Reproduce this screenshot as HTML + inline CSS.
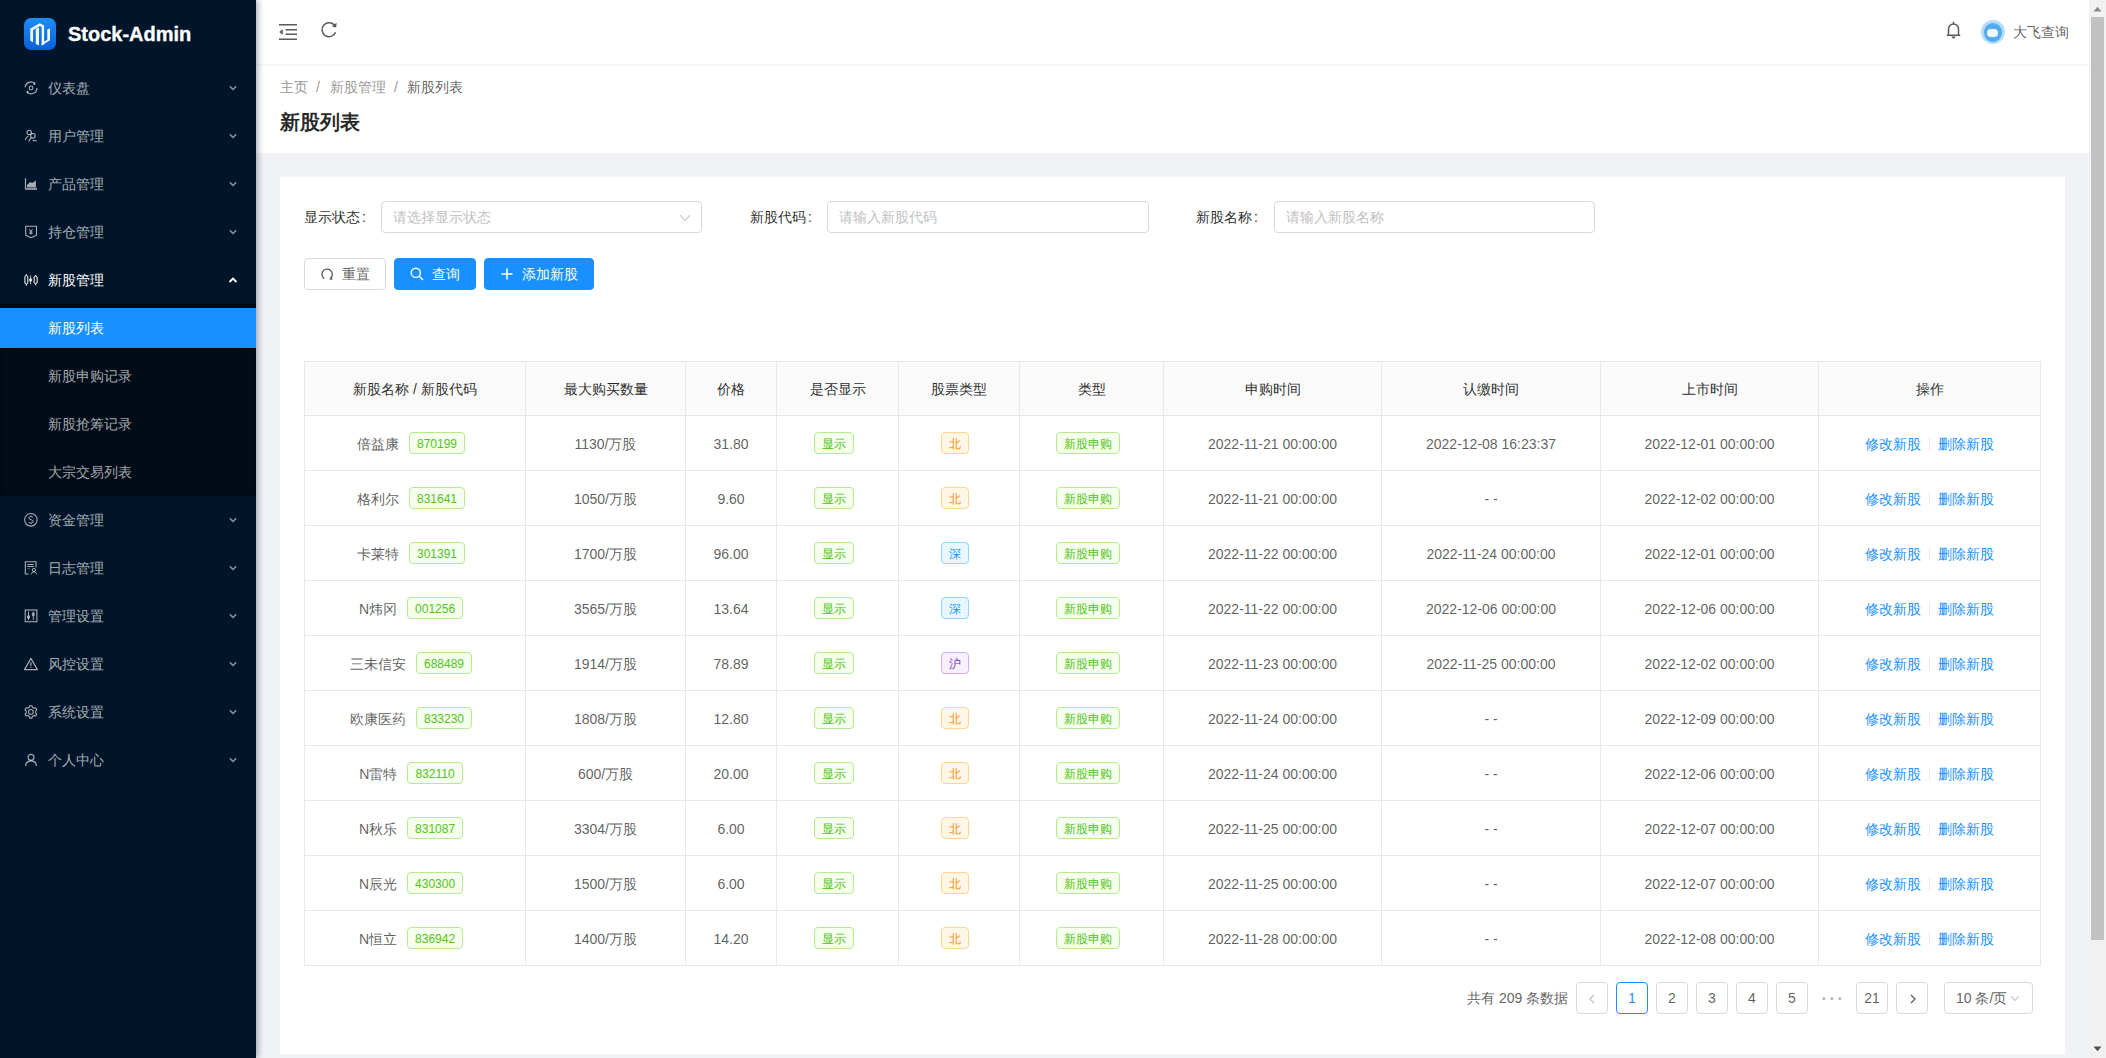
<!DOCTYPE html><html><head><meta charset="utf-8"><title>Stock-Admin</title><style>
*{margin:0;padding:0;box-sizing:border-box}
html,body{width:2106px;height:1058px;overflow:hidden}
body{background:#f0f2f5;font-family:"Liberation Sans",sans-serif;font-size:14px;color:rgba(0,0,0,.65);position:relative}
.a{position:absolute}
.side{left:0;top:0;width:256px;height:1058px;background:#001529;box-shadow:2px 0 6px rgba(0,21,41,.35);z-index:3}
.logo{left:24px;top:18px;width:32px;height:32px;border-radius:7px;background:linear-gradient(180deg,#1c8ef5,#0b5fd8)}
.brand{left:68px;top:20px;font-size:20px;font-weight:bold;color:#fff;-webkit-text-stroke:0.35px #fff;line-height:28px;white-space:nowrap}
.mi{left:0;width:256px;height:40px;line-height:40px;color:rgba(255,255,255,.65);white-space:nowrap}
.mi .t{position:absolute;left:48px;top:0}
.mi svg.ic{position:absolute;left:24px;top:13px;overflow:visible}
.mi svg.ar{position:absolute;left:228px;top:16px}
.sub{left:0;top:304px;width:256px;height:192px;background:#000c17;box-shadow:inset 0 2px 8px rgba(0,0,0,.45)}
.sel{background:#1890ff;color:#fff}
.hdr{left:256px;top:0;width:1833px;height:64px;background:#fff;box-shadow:0 1px 2px rgba(0,21,41,.07);z-index:2}
.ph{left:256px;top:64px;width:1833px;height:89px;background:#fff;z-index:1}
.card{left:280px;top:177px;width:1785px;height:877px;background:#fff}
.lbl{color:rgba(0,0,0,.85);white-space:nowrap;line-height:32px}
.inp{height:32px;border:1px solid #d9d9d9;border-radius:4px;background:#fff;color:#bfbfbf;line-height:30px;padding-left:11px;white-space:nowrap}
.btn{height:32px;border-radius:4px;line-height:30px;white-space:nowrap;border:1px solid #d9d9d9;color:rgba(0,0,0,.65);background:#fff}
.btn.p{background:#1890ff;border-color:#1890ff;color:#fff}
.th{background:#fafafa;color:rgba(0,0,0,.85)}
.hl{background:#e8e8e8}
.c{text-align:center;white-space:nowrap}
.tag{display:inline-block;height:22px;line-height:22px;padding:0 7px;border-radius:4px;border:1px solid;font-size:12px;vertical-align:middle;margin-right:8px;position:relative;top:-2px}
.tg{color:#52c41a;background:#f6ffed;border-color:#b7eb8f}
.to{color:#fa8c16;background:#fff7e6;border-color:#ffd591}
.tb{color:#1890ff;background:#e6f7ff;border-color:#91d5ff}
.tp{color:#722ed1;background:#f9f0ff;border-color:#d3adf7}
.lk{color:#1890ff}
.pg{width:32px;height:32px;border:1px solid #d9d9d9;border-radius:4px;background:#fff;text-align:center;line-height:30px;color:rgba(0,0,0,.65)}
.sb{left:2089px;top:0;width:17px;height:1058px;background:#f1f1f1;z-index:5}
</style></head><body>
<div class="a side">
<div class="a logo"><svg width="32" height="32" viewBox="0 0 32 32" style="position:absolute;left:0;top:0"><path d="M6.3 10.6L15.8 5.3L20.1 7.5V26.3L17.7 27.4V9.1L15.8 8.1L9.1 11.9V24.2L6.3 22.8Z" fill="#f2faff"/><path d="M11.8 10.9L15 9.2V27.4L11.8 26Z" fill="#f2faff"/><path d="M23.3 11.6L26 10.3V22.3L17.7 27.4V25L23.3 21.8Z" fill="#f2faff"/></svg></div>
<div class="a brand">Stock-Admin</div>
<div class="a sub"></div>
<div class="a mi" style="top:68px;"><svg class="ic" width="14" height="14" viewBox="0 0 14 14"><path d="M1.1 6.3A5.95 5.95 0 0 1 10.95 2.5" fill="none" stroke="currentColor" stroke-width="1.15"/><path d="M12.95 6.9A5.95 5.95 0 0 1 2.95 11.25" fill="none" stroke="currentColor" stroke-width="1.15"/><circle cx="10.4" cy="2.9" r="1.05" fill="currentColor"/><circle cx="3.5" cy="10.9" r="1.05" fill="currentColor"/><circle cx="7" cy="6.9" r="1.9" fill="none" stroke="currentColor" stroke-width="1.1"/></svg><span class="t">仪表盘</span><svg class="ar" width="10" height="8" viewBox="0 0 10 8"><path d="M1.8 2.3 L5 5.5 L8.2 2.3" fill="none" stroke="currentColor" stroke-width="1.5" opacity=".85"/></svg></div>
<div class="a mi" style="top:116px;"><svg class="ic" width="14" height="14" viewBox="0 0 14 14"><circle cx="5.2" cy="3.5" r="2.2" fill="none" stroke="currentColor" stroke-width="1.1"/><path d="M1.3 11C1.6 9 2.8 7.6 4.5 7" fill="none" stroke="currentColor" stroke-width="1.1"/><circle cx="8.9" cy="6.8" r="2.3" fill="none" stroke="currentColor" stroke-width="1.1"/><path d="M7.2 8.6L4.6 12.4" stroke="currentColor" stroke-width="1.1"/><path d="M8.7 11.6h4" stroke="currentColor" stroke-width="1.1"/></svg><span class="t">用户管理</span><svg class="ar" width="10" height="8" viewBox="0 0 10 8"><path d="M1.8 2.3 L5 5.5 L8.2 2.3" fill="none" stroke="currentColor" stroke-width="1.5" opacity=".85"/></svg></div>
<div class="a mi" style="top:164px;"><svg class="ic" width="14" height="14" viewBox="0 0 14 14"><path d="M1.5 1.2V12.2H13" fill="none" stroke="currentColor" stroke-width="1.2"/><path d="M3 10.2V8L6.2 5.1L8.2 5.9L11.9 3.4V10.2Z" fill="currentColor"/><path d="M2.6 11.3H13" stroke="currentColor" stroke-width="1.6" opacity=".55"/></svg><span class="t">产品管理</span><svg class="ar" width="10" height="8" viewBox="0 0 10 8"><path d="M1.8 2.3 L5 5.5 L8.2 2.3" fill="none" stroke="currentColor" stroke-width="1.5" opacity=".85"/></svg></div>
<div class="a mi" style="top:212px;"><svg class="ic" width="14" height="14" viewBox="0 0 14 14"><path d="M1.7 1.2H12.5V10.3L7 12.8L1.7 10.3Z" fill="none" stroke="currentColor" stroke-width="1.1" stroke-linejoin="round"/><path d="M5.2 4.2L6.9 6.2L8.6 4.2" fill="none" stroke="currentColor" stroke-width="1"/><path d="M6.9 6.2V9.6M5.3 7H8.5M5.3 8.3H8.5" stroke="currentColor" stroke-width=".9"/></svg><span class="t">持仓管理</span><svg class="ar" width="10" height="8" viewBox="0 0 10 8"><path d="M1.8 2.3 L5 5.5 L8.2 2.3" fill="none" stroke="currentColor" stroke-width="1.5" opacity=".85"/></svg></div>
<div class="a mi" style="top:260px;color:#fff"><svg class="ic" width="14" height="14" viewBox="0 0 14 14"><path d="M2.35 1.2V2.6M2.35 11V12.8M0.9 3.3L2.35 2.4L3.8 3.3V10.2L2.35 11.1L0.9 10.2Z" fill="none" stroke="currentColor" stroke-width="1"/><path d="M11.6 2V3.2M11.6 10.7V12.3M10.1 3.9L11.6 3.1L13.1 3.9V10L11.6 10.8L10.1 10Z" fill="none" stroke="currentColor" stroke-width="1"/><path d="M6.6 2.3V11.4" stroke="currentColor" stroke-width="1" opacity=".7"/><circle cx="6.6" cy="6.9" r="1.6" fill="currentColor" opacity=".85"/></svg><span class="t">新股管理</span><svg class="ar" width="10" height="8" viewBox="0 0 10 8"><path d="M1.5 6 L5 2.5 L8.5 6" fill="none" stroke="#fff" stroke-width="1.8"/></svg></div>
<div class="a mi" style="top:500px;"><svg class="ic" width="14" height="14" viewBox="0 0 14 14"><circle cx="6.9" cy="6.8" r="6.3" fill="none" stroke="currentColor" stroke-width="1.1"/><path d="M9 4.6C8.6 3.9 7.9 3.6 6.9 3.6C5.7 3.6 4.9 4.2 4.9 5.1C4.9 7.1 9.1 6.2 9.1 8.5C9.1 9.4 8.2 10.1 6.9 10.1C5.8 10.1 5 9.7 4.7 8.9M6.9 2.6V3.6M6.9 10.1V11" fill="none" stroke="currentColor" stroke-width="1"/></svg><span class="t">资金管理</span><svg class="ar" width="10" height="8" viewBox="0 0 10 8"><path d="M1.8 2.3 L5 5.5 L8.2 2.3" fill="none" stroke="currentColor" stroke-width="1.5" opacity=".85"/></svg></div>
<div class="a mi" style="top:548px;"><svg class="ic" width="14" height="14" viewBox="0 0 14 14"><path d="M12 6.6V0.7H1.3V13H4.6" fill="none" stroke="currentColor" stroke-width="1.1"/><path d="M3.3 3.5H9.8M3.3 5.5H9.8" stroke="currentColor" stroke-width="1"/><path d="M3.6 7.8H5.8" stroke="currentColor" stroke-width="1" opacity=".6"/><circle cx="9.9" cy="9" r="1.6" fill="none" stroke="currentColor" stroke-width="1"/><path d="M7.3 13.3C7.6 11.8 8.6 10.9 9.9 10.9S12.2 11.8 12.6 13.3" fill="none" stroke="currentColor" stroke-width="1"/></svg><span class="t">日志管理</span><svg class="ar" width="10" height="8" viewBox="0 0 10 8"><path d="M1.8 2.3 L5 5.5 L8.2 2.3" fill="none" stroke="currentColor" stroke-width="1.5" opacity=".85"/></svg></div>
<div class="a mi" style="top:596px;"><svg class="ic" width="14" height="14" viewBox="0 0 14 14"><rect x="1.2" y="1" width="11.7" height="11.7" fill="none" stroke="currentColor" stroke-width="1.1"/><path d="M4.5 2.6V11M9.3 2.6V11" stroke="currentColor" stroke-width="1"/><ellipse cx="4.5" cy="8" rx="1.1" ry="1.5" fill="none" stroke="currentColor" stroke-width="1"/><ellipse cx="9.3" cy="5.4" rx="1.1" ry="1.5" fill="none" stroke="currentColor" stroke-width="1"/></svg><span class="t">管理设置</span><svg class="ar" width="10" height="8" viewBox="0 0 10 8"><path d="M1.8 2.3 L5 5.5 L8.2 2.3" fill="none" stroke="currentColor" stroke-width="1.5" opacity=".85"/></svg></div>
<div class="a mi" style="top:644px;"><svg class="ic" width="14" height="14" viewBox="0 0 14 14"><path d="M6.9 1.4L13.4 12.6H0.5Z" fill="none" stroke="currentColor" stroke-width="1.15" stroke-linejoin="round"/><path d="M6.9 5.3V9" stroke="currentColor" stroke-width="1.2"/><circle cx="6.9" cy="10.4" r=".6" fill="currentColor"/></svg><span class="t">风控设置</span><svg class="ar" width="10" height="8" viewBox="0 0 10 8"><path d="M1.8 2.3 L5 5.5 L8.2 2.3" fill="none" stroke="currentColor" stroke-width="1.5" opacity=".85"/></svg></div>
<div class="a mi" style="top:692px;"><svg class="ic" width="14" height="14" viewBox="0 0 14 14"><path d="M5.47 2.21 L5.81 0.70 L7.99 0.70 L8.33 2.21 L10.24 3.32 L11.73 2.85 L12.82 4.75 L11.67 5.80 L11.67 8.00 L12.82 9.05 L11.73 10.95 L10.24 10.48 L8.33 11.59 L7.99 13.10 L5.81 13.10 L5.47 11.59 L3.56 10.48 L2.07 10.95 L0.98 9.05 L2.13 8.00 L2.13 5.80 L0.98 4.75 L2.07 2.85 L3.56 3.32Z" fill="none" stroke="currentColor" stroke-width="1.1" stroke-linejoin="round"/><circle cx="6.9" cy="6.9" r="2.4" fill="none" stroke="currentColor" stroke-width="1.1"/></svg><span class="t">系统设置</span><svg class="ar" width="10" height="8" viewBox="0 0 10 8"><path d="M1.8 2.3 L5 5.5 L8.2 2.3" fill="none" stroke="currentColor" stroke-width="1.5" opacity=".85"/></svg></div>
<div class="a mi" style="top:740px;"><svg class="ic" width="14" height="14" viewBox="0 0 14 14"><circle cx="7" cy="4.3" r="3" fill="none" stroke="currentColor" stroke-width="1.15"/><path d="M1.5 12.8C1.9 9.9 4.1 7.9 7 7.9S12.1 9.9 12.5 12.8" fill="none" stroke="currentColor" stroke-width="1.15"/></svg><span class="t">个人中心</span><svg class="ar" width="10" height="8" viewBox="0 0 10 8"><path d="M1.8 2.3 L5 5.5 L8.2 2.3" fill="none" stroke="currentColor" stroke-width="1.5" opacity=".85"/></svg></div>
<div class="a mi sel" style="top:308px"><span class="t">新股列表</span></div>
<div class="a mi" style="top:356px"><span class="t">新股申购记录</span></div>
<div class="a mi" style="top:404px"><span class="t">新股抢筹记录</span></div>
<div class="a mi" style="top:452px"><span class="t">大宗交易列表</span></div>
</div>
<div class="a hdr">
<svg class="a" style="left:23px;top:24px" width="18" height="16" viewBox="0 0 18 16"><path d="M0 0.8h18M6.5 5.8h11.5M6.5 10.2h11.5M0 15.2h18" stroke="#595959" stroke-width="1.6"/><path d="M0.2 8L3.8 5.2V10.8Z" fill="#595959"/></svg>
<svg class="a" style="left:64px;top:21px" width="18" height="18" viewBox="0 0 18 18"><path d="M15.6 11.2A7 7 0 1 1 15 5" fill="none" stroke="#595959" stroke-width="1.5"/><path d="M16.6 1.8L16.3 6.5L11.8 5.4Z" fill="#595959"/></svg>
<svg class="a" style="left:1690px;top:21px" width="15" height="18" viewBox="0 0 15 18"><path d="M7.5 0.8v1.5M2.5 14V8A5 5 0 0 1 12.5 8V14M0.8 14.2h13.4" fill="none" stroke="#595959" stroke-width="1.5"/><path d="M5.5 15.5a2 2 0 0 0 4 0z" fill="#595959"/></svg>
<div class="a" style="left:1725px;top:20px;width:24px;height:24px;border-radius:12px;background:#b5ddf7;overflow:hidden"><div class="a" style="left:3px;top:3px;width:18px;height:19px;border-radius:9px;background:#52acef"></div><div class="a" style="left:6px;top:9px;width:11px;height:8px;border-radius:5.5px;background:#f3fbff"></div></div>
<div class="a" style="left:1757px;top:22px;line-height:20px;color:rgba(0,0,0,.65);white-space:nowrap">大飞查询</div>
</div>
<div class="a ph">
<div class="a" style="left:24px;top:13px;line-height:20px;white-space:nowrap;color:rgba(0,0,0,.45)">主页</div>
<div class="a" style="left:60px;top:13px;line-height:20px;white-space:nowrap;color:rgba(0,0,0,.45)">/</div>
<div class="a" style="left:74px;top:13px;line-height:20px;white-space:nowrap;color:rgba(0,0,0,.45)">新股管理</div>
<div class="a" style="left:138px;top:13px;line-height:20px;white-space:nowrap;color:rgba(0,0,0,.45)">/</div>
<div class="a" style="left:151px;top:13px;line-height:20px;white-space:nowrap;color:rgba(0,0,0,.65)">新股列表</div>
<div class="a" style="left:24px;top:44px;line-height:28px;font-size:20px;font-weight:bold;color:rgba(0,0,0,.85);white-space:nowrap">新股列表</div>
</div>
<div class="a card"></div>
<div class="a lbl" style="left:304px;top:201px">显示状态<span style="margin-left:2px">:</span></div>
<div class="a lbl" style="left:750px;top:201px">新股代码<span style="margin-left:2px">:</span></div>
<div class="a lbl" style="left:1196px;top:201px">新股名称<span style="margin-left:2px">:</span></div>
<div class="a inp" style="left:381px;top:201px;width:321px">请选择显示状态<svg class="a" style="left:297px;top:12px" width="12" height="8" viewBox="0 0 12 8"><path d="M1 1L6 6.5L11 1" fill="none" stroke="#bfbfbf" stroke-width="1.1"/></svg></div>
<div class="a inp" style="left:827px;top:201px;width:322px">请输入新股代码</div>
<div class="a inp" style="left:1274px;top:201px;width:321px">请输入新股名称</div>
<div class="a btn" style="left:304px;top:258px;width:82px"><svg class="a" style="left:15px;top:8px" width="14" height="14" viewBox="0 0 14 14"><path d="M4.2 11.6A5.2 5.2 0 1 1 10.8 11" fill="none" stroke="#595959" stroke-width="1.3"/><path d="M9.2 12.8L12.6 12.4L11.4 9.2Z" fill="#595959"/></svg><span class="a" style="left:37px;top:0">重置</span></div>
<div class="a btn p" style="left:394px;top:258px;width:82px"><svg class="a" style="left:15px;top:8px" width="14" height="14" viewBox="0 0 14 14"><circle cx="5.8" cy="5.8" r="4.6" fill="none" stroke="#fff" stroke-width="1.4"/><path d="M9.2 9.2L13 13" stroke="#fff" stroke-width="1.5"/></svg><span class="a" style="left:37px;top:0">查询</span></div>
<div class="a btn p" style="left:484px;top:258px;width:110px"><svg class="a" style="left:15px;top:8px" width="14" height="14" viewBox="0 0 14 14"><path d="M7 1.5v11M1.5 7h11" stroke="#fff" stroke-width="1.6"/></svg><span class="a" style="left:37px;top:0">添加新股</span></div>
<div class="a th" style="left:304px;top:361px;width:1737px;height:54px"></div>
<div class="a c" style="left:305px;top:363px;width:220px;line-height:53px;color:rgba(0,0,0,.85)">新股名称 / 新股代码</div>
<div class="a c" style="left:526px;top:363px;width:159px;line-height:53px;color:rgba(0,0,0,.85)">最大购买数量</div>
<div class="a c" style="left:686px;top:363px;width:90px;line-height:53px;color:rgba(0,0,0,.85)">价格</div>
<div class="a c" style="left:777px;top:363px;width:121px;line-height:53px;color:rgba(0,0,0,.85)">是否显示</div>
<div class="a c" style="left:899px;top:363px;width:120px;line-height:53px;color:rgba(0,0,0,.85)">股票类型</div>
<div class="a c" style="left:1020px;top:363px;width:143px;line-height:53px;color:rgba(0,0,0,.85)">类型</div>
<div class="a c" style="left:1164px;top:363px;width:217px;line-height:53px;color:rgba(0,0,0,.85)">申购时间</div>
<div class="a c" style="left:1382px;top:363px;width:218px;line-height:53px;color:rgba(0,0,0,.85)">认缴时间</div>
<div class="a c" style="left:1601px;top:363px;width:217px;line-height:53px;color:rgba(0,0,0,.85)">上市时间</div>
<div class="a c" style="left:1819px;top:363px;width:221px;line-height:53px;color:rgba(0,0,0,.85)">操作</div>
<div class="a c" style="left:305px;top:417px;width:220px;line-height:54px">倍益康<span class="tag tg" style="margin-left:10px">870199</span></div>
<div class="a c" style="left:526px;top:417px;width:159px;line-height:54px">1130/万股</div>
<div class="a c" style="left:686px;top:417px;width:90px;line-height:54px">31.80</div>
<div class="a c" style="left:777px;top:417px;width:121px;line-height:54px"><span class="tag tg">显示</span></div>
<div class="a c" style="left:899px;top:417px;width:120px;line-height:54px"><span class="tag to">北</span></div>
<div class="a c" style="left:1020px;top:417px;width:143px;line-height:54px"><span class="tag tg">新股申购</span></div>
<div class="a c" style="left:1164px;top:417px;width:217px;line-height:54px">2022-11-21 00:00:00</div>
<div class="a c" style="left:1382px;top:417px;width:218px;line-height:54px">2022-12-08 16:23:37</div>
<div class="a c" style="left:1601px;top:417px;width:217px;line-height:54px">2022-12-01 00:00:00</div>
<div class="a c" style="left:1819px;top:417px;width:221px;line-height:54px"><span class="lk">修改新股</span><span style="display:inline-block;width:1px;height:12px;background:#e8e8e8;margin:0 8px;vertical-align:middle;position:relative;top:-1px"></span><span class="lk">删除新股</span></div>
<div class="a c" style="left:305px;top:472px;width:220px;line-height:54px">格利尔<span class="tag tg" style="margin-left:10px">831641</span></div>
<div class="a c" style="left:526px;top:472px;width:159px;line-height:54px">1050/万股</div>
<div class="a c" style="left:686px;top:472px;width:90px;line-height:54px">9.60</div>
<div class="a c" style="left:777px;top:472px;width:121px;line-height:54px"><span class="tag tg">显示</span></div>
<div class="a c" style="left:899px;top:472px;width:120px;line-height:54px"><span class="tag to">北</span></div>
<div class="a c" style="left:1020px;top:472px;width:143px;line-height:54px"><span class="tag tg">新股申购</span></div>
<div class="a c" style="left:1164px;top:472px;width:217px;line-height:54px">2022-11-21 00:00:00</div>
<div class="a c" style="left:1382px;top:472px;width:218px;line-height:54px">- -</div>
<div class="a c" style="left:1601px;top:472px;width:217px;line-height:54px">2022-12-02 00:00:00</div>
<div class="a c" style="left:1819px;top:472px;width:221px;line-height:54px"><span class="lk">修改新股</span><span style="display:inline-block;width:1px;height:12px;background:#e8e8e8;margin:0 8px;vertical-align:middle;position:relative;top:-1px"></span><span class="lk">删除新股</span></div>
<div class="a c" style="left:305px;top:527px;width:220px;line-height:54px">卡莱特<span class="tag tg" style="margin-left:10px">301391</span></div>
<div class="a c" style="left:526px;top:527px;width:159px;line-height:54px">1700/万股</div>
<div class="a c" style="left:686px;top:527px;width:90px;line-height:54px">96.00</div>
<div class="a c" style="left:777px;top:527px;width:121px;line-height:54px"><span class="tag tg">显示</span></div>
<div class="a c" style="left:899px;top:527px;width:120px;line-height:54px"><span class="tag tb">深</span></div>
<div class="a c" style="left:1020px;top:527px;width:143px;line-height:54px"><span class="tag tg">新股申购</span></div>
<div class="a c" style="left:1164px;top:527px;width:217px;line-height:54px">2022-11-22 00:00:00</div>
<div class="a c" style="left:1382px;top:527px;width:218px;line-height:54px">2022-11-24 00:00:00</div>
<div class="a c" style="left:1601px;top:527px;width:217px;line-height:54px">2022-12-01 00:00:00</div>
<div class="a c" style="left:1819px;top:527px;width:221px;line-height:54px"><span class="lk">修改新股</span><span style="display:inline-block;width:1px;height:12px;background:#e8e8e8;margin:0 8px;vertical-align:middle;position:relative;top:-1px"></span><span class="lk">删除新股</span></div>
<div class="a c" style="left:305px;top:582px;width:220px;line-height:54px">N炜冈<span class="tag tg" style="margin-left:10px">001256</span></div>
<div class="a c" style="left:526px;top:582px;width:159px;line-height:54px">3565/万股</div>
<div class="a c" style="left:686px;top:582px;width:90px;line-height:54px">13.64</div>
<div class="a c" style="left:777px;top:582px;width:121px;line-height:54px"><span class="tag tg">显示</span></div>
<div class="a c" style="left:899px;top:582px;width:120px;line-height:54px"><span class="tag tb">深</span></div>
<div class="a c" style="left:1020px;top:582px;width:143px;line-height:54px"><span class="tag tg">新股申购</span></div>
<div class="a c" style="left:1164px;top:582px;width:217px;line-height:54px">2022-11-22 00:00:00</div>
<div class="a c" style="left:1382px;top:582px;width:218px;line-height:54px">2022-12-06 00:00:00</div>
<div class="a c" style="left:1601px;top:582px;width:217px;line-height:54px">2022-12-06 00:00:00</div>
<div class="a c" style="left:1819px;top:582px;width:221px;line-height:54px"><span class="lk">修改新股</span><span style="display:inline-block;width:1px;height:12px;background:#e8e8e8;margin:0 8px;vertical-align:middle;position:relative;top:-1px"></span><span class="lk">删除新股</span></div>
<div class="a c" style="left:305px;top:637px;width:220px;line-height:54px">三未信安<span class="tag tg" style="margin-left:10px">688489</span></div>
<div class="a c" style="left:526px;top:637px;width:159px;line-height:54px">1914/万股</div>
<div class="a c" style="left:686px;top:637px;width:90px;line-height:54px">78.89</div>
<div class="a c" style="left:777px;top:637px;width:121px;line-height:54px"><span class="tag tg">显示</span></div>
<div class="a c" style="left:899px;top:637px;width:120px;line-height:54px"><span class="tag tp">沪</span></div>
<div class="a c" style="left:1020px;top:637px;width:143px;line-height:54px"><span class="tag tg">新股申购</span></div>
<div class="a c" style="left:1164px;top:637px;width:217px;line-height:54px">2022-11-23 00:00:00</div>
<div class="a c" style="left:1382px;top:637px;width:218px;line-height:54px">2022-11-25 00:00:00</div>
<div class="a c" style="left:1601px;top:637px;width:217px;line-height:54px">2022-12-02 00:00:00</div>
<div class="a c" style="left:1819px;top:637px;width:221px;line-height:54px"><span class="lk">修改新股</span><span style="display:inline-block;width:1px;height:12px;background:#e8e8e8;margin:0 8px;vertical-align:middle;position:relative;top:-1px"></span><span class="lk">删除新股</span></div>
<div class="a c" style="left:305px;top:692px;width:220px;line-height:54px">欧康医药<span class="tag tg" style="margin-left:10px">833230</span></div>
<div class="a c" style="left:526px;top:692px;width:159px;line-height:54px">1808/万股</div>
<div class="a c" style="left:686px;top:692px;width:90px;line-height:54px">12.80</div>
<div class="a c" style="left:777px;top:692px;width:121px;line-height:54px"><span class="tag tg">显示</span></div>
<div class="a c" style="left:899px;top:692px;width:120px;line-height:54px"><span class="tag to">北</span></div>
<div class="a c" style="left:1020px;top:692px;width:143px;line-height:54px"><span class="tag tg">新股申购</span></div>
<div class="a c" style="left:1164px;top:692px;width:217px;line-height:54px">2022-11-24 00:00:00</div>
<div class="a c" style="left:1382px;top:692px;width:218px;line-height:54px">- -</div>
<div class="a c" style="left:1601px;top:692px;width:217px;line-height:54px">2022-12-09 00:00:00</div>
<div class="a c" style="left:1819px;top:692px;width:221px;line-height:54px"><span class="lk">修改新股</span><span style="display:inline-block;width:1px;height:12px;background:#e8e8e8;margin:0 8px;vertical-align:middle;position:relative;top:-1px"></span><span class="lk">删除新股</span></div>
<div class="a c" style="left:305px;top:747px;width:220px;line-height:54px">N雷特<span class="tag tg" style="margin-left:10px">832110</span></div>
<div class="a c" style="left:526px;top:747px;width:159px;line-height:54px">600/万股</div>
<div class="a c" style="left:686px;top:747px;width:90px;line-height:54px">20.00</div>
<div class="a c" style="left:777px;top:747px;width:121px;line-height:54px"><span class="tag tg">显示</span></div>
<div class="a c" style="left:899px;top:747px;width:120px;line-height:54px"><span class="tag to">北</span></div>
<div class="a c" style="left:1020px;top:747px;width:143px;line-height:54px"><span class="tag tg">新股申购</span></div>
<div class="a c" style="left:1164px;top:747px;width:217px;line-height:54px">2022-11-24 00:00:00</div>
<div class="a c" style="left:1382px;top:747px;width:218px;line-height:54px">- -</div>
<div class="a c" style="left:1601px;top:747px;width:217px;line-height:54px">2022-12-06 00:00:00</div>
<div class="a c" style="left:1819px;top:747px;width:221px;line-height:54px"><span class="lk">修改新股</span><span style="display:inline-block;width:1px;height:12px;background:#e8e8e8;margin:0 8px;vertical-align:middle;position:relative;top:-1px"></span><span class="lk">删除新股</span></div>
<div class="a c" style="left:305px;top:802px;width:220px;line-height:54px">N秋乐<span class="tag tg" style="margin-left:10px">831087</span></div>
<div class="a c" style="left:526px;top:802px;width:159px;line-height:54px">3304/万股</div>
<div class="a c" style="left:686px;top:802px;width:90px;line-height:54px">6.00</div>
<div class="a c" style="left:777px;top:802px;width:121px;line-height:54px"><span class="tag tg">显示</span></div>
<div class="a c" style="left:899px;top:802px;width:120px;line-height:54px"><span class="tag to">北</span></div>
<div class="a c" style="left:1020px;top:802px;width:143px;line-height:54px"><span class="tag tg">新股申购</span></div>
<div class="a c" style="left:1164px;top:802px;width:217px;line-height:54px">2022-11-25 00:00:00</div>
<div class="a c" style="left:1382px;top:802px;width:218px;line-height:54px">- -</div>
<div class="a c" style="left:1601px;top:802px;width:217px;line-height:54px">2022-12-07 00:00:00</div>
<div class="a c" style="left:1819px;top:802px;width:221px;line-height:54px"><span class="lk">修改新股</span><span style="display:inline-block;width:1px;height:12px;background:#e8e8e8;margin:0 8px;vertical-align:middle;position:relative;top:-1px"></span><span class="lk">删除新股</span></div>
<div class="a c" style="left:305px;top:857px;width:220px;line-height:54px">N辰光<span class="tag tg" style="margin-left:10px">430300</span></div>
<div class="a c" style="left:526px;top:857px;width:159px;line-height:54px">1500/万股</div>
<div class="a c" style="left:686px;top:857px;width:90px;line-height:54px">6.00</div>
<div class="a c" style="left:777px;top:857px;width:121px;line-height:54px"><span class="tag tg">显示</span></div>
<div class="a c" style="left:899px;top:857px;width:120px;line-height:54px"><span class="tag to">北</span></div>
<div class="a c" style="left:1020px;top:857px;width:143px;line-height:54px"><span class="tag tg">新股申购</span></div>
<div class="a c" style="left:1164px;top:857px;width:217px;line-height:54px">2022-11-25 00:00:00</div>
<div class="a c" style="left:1382px;top:857px;width:218px;line-height:54px">- -</div>
<div class="a c" style="left:1601px;top:857px;width:217px;line-height:54px">2022-12-07 00:00:00</div>
<div class="a c" style="left:1819px;top:857px;width:221px;line-height:54px"><span class="lk">修改新股</span><span style="display:inline-block;width:1px;height:12px;background:#e8e8e8;margin:0 8px;vertical-align:middle;position:relative;top:-1px"></span><span class="lk">删除新股</span></div>
<div class="a c" style="left:305px;top:912px;width:220px;line-height:54px">N恒立<span class="tag tg" style="margin-left:10px">836942</span></div>
<div class="a c" style="left:526px;top:912px;width:159px;line-height:54px">1400/万股</div>
<div class="a c" style="left:686px;top:912px;width:90px;line-height:54px">14.20</div>
<div class="a c" style="left:777px;top:912px;width:121px;line-height:54px"><span class="tag tg">显示</span></div>
<div class="a c" style="left:899px;top:912px;width:120px;line-height:54px"><span class="tag to">北</span></div>
<div class="a c" style="left:1020px;top:912px;width:143px;line-height:54px"><span class="tag tg">新股申购</span></div>
<div class="a c" style="left:1164px;top:912px;width:217px;line-height:54px">2022-11-28 00:00:00</div>
<div class="a c" style="left:1382px;top:912px;width:218px;line-height:54px">- -</div>
<div class="a c" style="left:1601px;top:912px;width:217px;line-height:54px">2022-12-08 00:00:00</div>
<div class="a c" style="left:1819px;top:912px;width:221px;line-height:54px"><span class="lk">修改新股</span><span style="display:inline-block;width:1px;height:12px;background:#e8e8e8;margin:0 8px;vertical-align:middle;position:relative;top:-1px"></span><span class="lk">删除新股</span></div>
<div class="a hl" style="left:304px;top:361px;width:1px;height:605px"></div>
<div class="a hl" style="left:525px;top:361px;width:1px;height:605px"></div>
<div class="a hl" style="left:685px;top:361px;width:1px;height:605px"></div>
<div class="a hl" style="left:776px;top:361px;width:1px;height:605px"></div>
<div class="a hl" style="left:898px;top:361px;width:1px;height:605px"></div>
<div class="a hl" style="left:1019px;top:361px;width:1px;height:605px"></div>
<div class="a hl" style="left:1163px;top:361px;width:1px;height:605px"></div>
<div class="a hl" style="left:1381px;top:361px;width:1px;height:605px"></div>
<div class="a hl" style="left:1600px;top:361px;width:1px;height:605px"></div>
<div class="a hl" style="left:1818px;top:361px;width:1px;height:605px"></div>
<div class="a hl" style="left:2040px;top:361px;width:1px;height:605px"></div>
<div class="a hl" style="left:304px;top:361px;width:1737px;height:1px"></div>
<div class="a hl" style="left:304px;top:415px;width:1737px;height:1px"></div>
<div class="a hl" style="left:304px;top:470px;width:1737px;height:1px"></div>
<div class="a hl" style="left:304px;top:525px;width:1737px;height:1px"></div>
<div class="a hl" style="left:304px;top:580px;width:1737px;height:1px"></div>
<div class="a hl" style="left:304px;top:635px;width:1737px;height:1px"></div>
<div class="a hl" style="left:304px;top:690px;width:1737px;height:1px"></div>
<div class="a hl" style="left:304px;top:745px;width:1737px;height:1px"></div>
<div class="a hl" style="left:304px;top:800px;width:1737px;height:1px"></div>
<div class="a hl" style="left:304px;top:855px;width:1737px;height:1px"></div>
<div class="a hl" style="left:304px;top:910px;width:1737px;height:1px"></div>
<div class="a hl" style="left:304px;top:965px;width:1737px;height:1px"></div>
<div class="a" style="left:1467px;top:982px;line-height:32px;white-space:nowrap">共有 209 条数据</div>
<div class="a pg" style="left:1576px;top:982px"><svg class="a" style="left:11px;top:11px" width="8" height="10" viewBox="0 0 8 10"><path d="M6 1L2 5L6 9" fill="none" stroke="#bfbfbf" stroke-width="1.2"/></svg></div>
<div class="a pg" style="left:1616px;top:982px;border-color:#1890ff;color:#1890ff">1</div>
<div class="a pg" style="left:1656px;top:982px;">2</div>
<div class="a pg" style="left:1696px;top:982px;">3</div>
<div class="a pg" style="left:1736px;top:982px;">4</div>
<div class="a pg" style="left:1776px;top:982px;">5</div>
<div class="a pg" style="left:1856px;top:982px;">21</div>
<svg class="a" style="left:1816px;top:982px" width="32" height="32" viewBox="0 0 32 32"><circle cx="7.8" cy="16.5" r="1.5" fill="#b5b5b5"/><circle cx="15.8" cy="16.5" r="1.5" fill="#b5b5b5"/><circle cx="23.8" cy="16.5" r="1.5" fill="#b5b5b5"/></svg>
<div class="a pg" style="left:1896px;top:982px"><svg class="a" style="left:12px;top:11px" width="8" height="10" viewBox="0 0 8 10"><path d="M2 1L6 5L2 9" fill="none" stroke="#595959" stroke-width="1.2"/></svg></div>
<div class="a pg" style="left:1944px;top:982px;width:89px;text-align:left;padding-left:11px">10 条/页<svg class="a" style="left:65px;top:12px" width="10" height="7" viewBox="0 0 10 7"><path d="M1 1L5 5.5L9 1" fill="none" stroke="#bfbfbf" stroke-width="1.1"/></svg></div>
<div class="a sb"><div class="a" style="left:2px;top:17px;width:13px;height:923px;background:#c1c1c1"></div><svg class="a" style="left:4px;top:6px" width="9" height="6" viewBox="0 0 9 6"><path d="M0.5 5.5L4.5 0.8L8.5 5.5Z" fill="#8a8a8a"/></svg><svg class="a" style="left:4px;top:1046px" width="9" height="6" viewBox="0 0 9 6"><path d="M0.5 0.5L4.5 5.2L8.5 0.5Z" fill="#505050"/></svg></div>
</body></html>
